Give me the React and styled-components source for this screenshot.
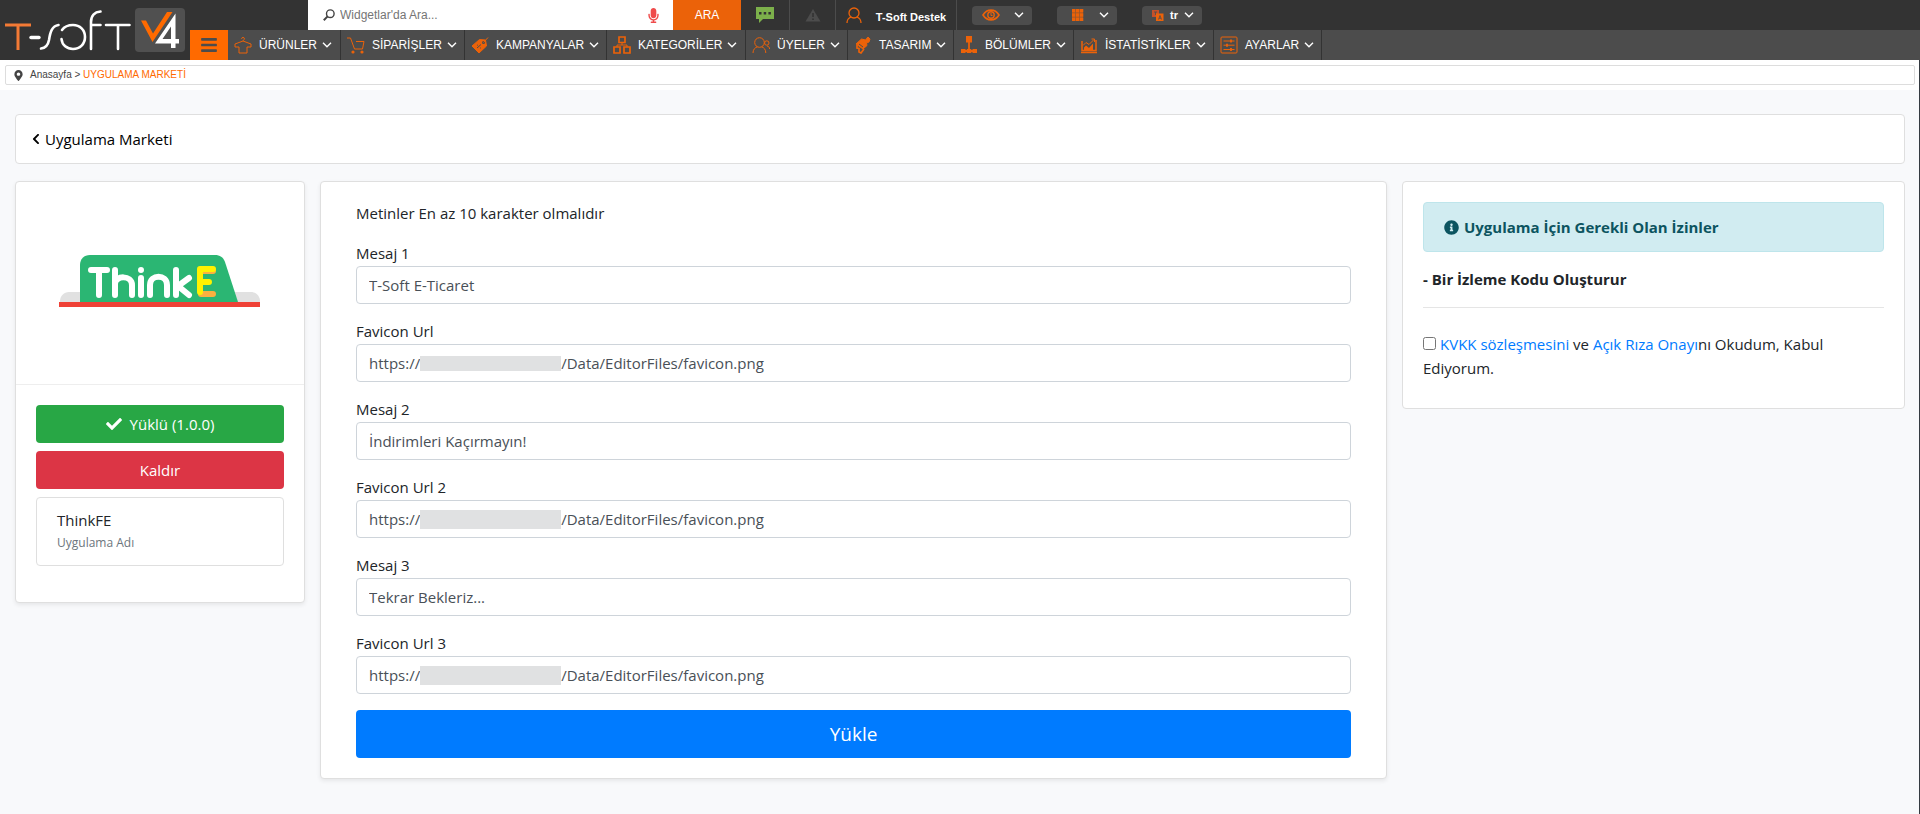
import { useState } from 'react';
import styled, { createGlobalStyle } from 'styled-components';
import {
    FaBars, FaCheck, FaChevronLeft, FaInfoCircle, FaMapMarkerAlt, FaMicrophone,
} from 'react-icons/fa';

const menuItems = [
    { label: 'ÜRÜNLER', icon: 'shirt', width: 113 },
    { label: 'SİPARİŞLER', icon: 'cart', width: 124 },
    { label: 'KAMPANYALAR', icon: 'tag', width: 142 },
    { label: 'KATEGORİLER', icon: 'boxes', width: 139 },
    { label: 'ÜYELER', icon: 'users', width: 102 },
    { label: 'TASARIM', icon: 'brush', width: 106 },
    { label: 'BÖLÜMLER', icon: 'tree', width: 120 },
    { label: 'İSTATİSTİKLER', icon: 'chart', width: 140 },
    { label: 'AYARLAR', icon: 'sliders', width: 108 },
];

const fields = [
    { id: 'mesaj1', label: 'Mesaj 1', value: 'T-Soft E-Ticaret' },
    { id: 'favicon1', label: 'Favicon Url', value: '/Data/EditorFiles/favicon.png', mask: 15 },
    { id: 'mesaj2', label: 'Mesaj 2', value: 'İndirimleri Kaçırmayın!' },
    { id: 'favicon2', label: 'Favicon Url 2', value: '/Data/EditorFiles/favicon.png', mask: 19 },
    { id: 'mesaj3', label: 'Mesaj 3', value: 'Tekrar Bekleriz...' },
    { id: 'favicon3', label: 'Favicon Url 3', value: '/Data/EditorFiles/favicon.png', mask: 19 },
];

const shapes = {
    shirt: (
        <path d="M7.5 2.8C7.5 1 10.5 1 10.5 2.8 10.5 4 9 3.8 9 5L1 8v3h4v6h8v-6h4V8L9 5" />
    ),
    cart: (
        <>
            <path d="M0 2h3.5l4 11h8L17 5.5H9" />
            <circle cx="6" cy="16" r="1.6" fill="currentColor" stroke="none" />
            <circle cx="15" cy="16" r="1.6" fill="currentColor" stroke="none" />
        </>
    ),
    tag: (
        <>
            <path d="M1 10 8.5 3.5l6 .5 1 6L8 17Z" fill="currentColor" />
            <circle cx="12.5" cy="6.5" r="1.5" fill="#4c4c4c" stroke="none" />
            <path d="m6 12 4-3.5M6 9.2h.8M9 12h.8" stroke="#4c4c4c" />
            <path d="M12.5 6.5 17 1.5" />
        </>
    ),
    boxes: (
        <>
            <path d="M6 1h6v5.5H6zM1 11h6v6H1zM11 11h6v6h-6z" strokeWidth="1.7" />
            <path d="M9 6.5V9M4 11V9h10v2" />
        </>
    ),
    users: (
        <>
            <circle cx="7.5" cy="6.5" r="4.8" />
            <path d="M1 17c0-3.5 2-5.5 4.5-6.2M9.5 10.8c2.5.7 4.3 2.7 4.3 6.2" />
            <circle cx="14.8" cy="7" r="2.2" />
            <path d="M15 10c1.7.3 2.5 1.3 2.6 3" />
        </>
    ),
    brush: (
        <>
            <path d="M2 8 7.5 3l4 1L14 1l2 2-1 3-2.5 1 .5 2.5L9 13Z" fill="currentColor" strokeWidth="1" />
            <path d="M3 9v3l2 .5V16l2 1 3-4" strokeWidth="1.7" />
            <path d="m5 8 4 3" stroke="#4c4c4c" />
        </>
    ),
    tree: (
        <>
            <path d="M6 0h6v6.5H6zM1 13h4.5v4H1zM6.8 13h4.5v4H6.8zM12.5 13H17v4h-4.5z" fill="currentColor" stroke="none" />
            <path d="M9 6v7M3 15h12" strokeWidth="1.8" />
        </>
    ),
    chart: (
        <>
            <path d="M2 5v9.5h14V4M1 16.5h16" strokeWidth="1.5" />
            <path d="M3 9.5 6 6.5l3 2 5-5M11.5 3H14.5V6" />
            <path d="M4 14v-2.5l2-2 3 2.5 4-4.5V14Z" fill="currentColor" stroke="none" />
        </>
    ),
    sliders: (
        <>
            <rect x="1" y="1" width="16" height="16" rx="1" />
            <path d="M3.5 5h11M3.5 9.2h11M3.5 13.5h11" />
            <path d="M11 3.5v3M7 7.7v3M11 12v3" strokeWidth="1.8" />
        </>
    ),
};

const Chevron = () => (
    <svg width="10" height="6" viewBox="0 0 10 6" fill="none" stroke="#fff" strokeWidth="1.4">
        <path d="m1 .8 4 4 4-4" />
    </svg>
);

const Logo = () => (
    <svg width="190" height="60" viewBox="0 0 190 60" fill="none" role="img" aria-label="T-Soft V4">
        <path d="M5 25h26M18 25v25" stroke="#f37a35" strokeWidth="3" />
        <g stroke="#fff" strokeWidth="2.6" strokeLinecap="round">
            <path d="M31 37.5h8" strokeWidth="3.4" />
            <path d="M41 48.5c5-.5 7-3 8-8.5 1.2-8 3-14 9.5-15" />
            <path d="M62 30c2.5-3.5 6-5 11-5 7 0 12 5 12 12s-5 12-12 12c-6 0-11-4-11.5-10" />
            <path d="M91 49V22c0-6 3.5-10 9.5-10.5M91 25h9.5M106 25h23.5M118 25v24" />
        </g>
        <rect x="135" y="8" width="50" height="44" rx="4" fill="#505050" />
        <path d="M141 20.5h5l7 13L167 12h5.5L152.5 42Z" fill="#ff6a00" />
        <path fillRule="evenodd" d="M175.5 13.5V39h3.5v4.5h-3.5V48H171v-4.5h-16ZM171 26.5 162.5 39h8.5Z" fill="#fff" />
    </svg>
);

// Roof sign of the application, drawn with thick round strokes
const AppLogo = () => (
    <svg width="202" height="54" viewBox="0 0 202 54" role="img" aria-label="ThinkE">
        <path d="M1 48v-1c0-5 4-9 9-9h182c5 0 9 4 9 9v1Z" fill="#e1e1e1" />
        <path d="M21 48V11C21 5 25 1 31 1h125c5 0 8 2 10 7l13 40Z" fill="#2bb673" />
        <path d="M0 48h201v5H0z" fill="#ef4136" />
        <g fill="none" stroke="#fff" strokeWidth="6" strokeLinecap="round" strokeLinejoin="round">
            <path d="M32 16h16M40 16v25" />
            <path d="M56 16v25M56 30c0-9 17-9 17 1v10" />
            <path d="M82 24v17M82 16v.1" />
            <path d="M91 41V31c0-11 17-11 17 0v10" />
            <path d="M117 16v25M130 24l-11 8 11 9" />
        </g>
        <g fill="none" strokeWidth="6" strokeLinecap="round" strokeLinejoin="round">
            <path d="M142 17h12M142 40h12" stroke="#fbb040" />
            <path d="M154 15h-13v23M141 28h9" stroke="#fff200" />
        </g>
    </svg>
);

const App = () => {
    const [values, setValues] = useState(fields.map((f) => f.value));
    const [accepted, setAccepted] = useState(false);

    const changeValue = (index, value) => {
        setValues(values.map((v, i) => (i === index ? value : v)));
    };

    return (
        <>
            <GlobalStyle />
            <Header>
                <Logo />
                <HeaderRows>
                    <TopRow>
                        <SearchBox>
                            <svg width="12" height="12" viewBox="0 0 12 12" fill="none" stroke="#444" strokeWidth="1.4">
                                <circle cx="7.3" cy="4.7" r="3.8" />
                                <path d="M4.6 7.4.8 11.2" strokeWidth="2" />
                            </svg>
                            <SearchInput type="text" aria-label="Ara" placeholder="Widgetlar'da Ara..." />
                            <FaMicrophone color="#ef4b4b" size={15} />
                        </SearchBox>
                        <SearchButton>ARA</SearchButton>
                        <TopButton $width={49} aria-label="Mesajlar">
                            <svg width="18" height="16" viewBox="0 0 18 16">
                                <path d="M0 0h18v12H7l-4 4v-4H0Z" fill="#7cb04b" />
                                <path d="M3 5h2.5v2.5H3zM7.7 5h2.5v2.5H7.7zM12.4 5h2.5v2.5h-2.5z" fill="#333" />
                            </svg>
                        </TopButton>
                        <TopButton $width={46} aria-label="Uyarılar">
                            <svg width="16" height="14" viewBox="0 0 16 14">
                                <path d="M8 1 15.5 13.5H.5Z" fill="#4c4c4c" />
                                <path d="M8 5v4M8 10.5V12" stroke="#333" strokeWidth="1.6" />
                            </svg>
                        </TopButton>
                        <TopButton $width={121}>
                            <svg width="16" height="16" viewBox="0 0 16 16" fill="none" stroke="#eb6209" strokeWidth="1.3">
                                <circle cx="8" cy="6" r="5" />
                                <path d="M1 16c0-3.5 1.5-5 4-6M11 10c2.5 1 4 2.5 4 6" />
                            </svg>
                            <SupportText>T-Soft Destek</SupportText>
                        </TopButton>
                        <Pills>
                            <Pill aria-label="Görünüm">
                                <svg width="18" height="12" viewBox="0 0 18 12" fill="none" stroke="#eb6209">
                                    <path d="M1 6c4-6.5 12-6.5 16 0-4 6.5-12 6.5-16 0Z" strokeWidth="1.6" />
                                    <circle cx="9" cy="6" r="3.2" strokeWidth="1.4" />
                                    <path d="M9 4v2.5h1.5" />
                                </svg>
                                <Chevron />
                            </Pill>
                            <Pill aria-label="Uygulamalar">
                                <svg width="20" height="12" viewBox="0 0 20 12" fill="#eb6209">
                                    <path d="M5 0h11v12H5z" fillOpacity=".45" />
                                    <path d="M5 0h3.3v3.5H5zM9 0h3.3v3.5H9zM13 0h3.3v3.5H13zM5 4.2h3.3v3.5H5zM9 4.2h3.3v3.5H9zM13 4.2h3.3v3.5H13zM5 8.5h3.3V12H5zM9 8.5h3.3V12H9zM13 8.5h3.3V12H13z" />
                                </svg>
                                <Chevron />
                            </Pill>
                            <Pill>
                                <svg width="12" height="11" viewBox="0 0 12 11">
                                    <path d="M0 0h7v7H0z" fill="#c4512a" />
                                    <path d="M4 3.5h7.5V11H4z" fill="#eb6209" />
                                    <path d="M2 2h3M3.5 2v3M6.5 9.5l1.5-4 1.5 4M7 8.2h2" stroke="#4c4c4c" strokeWidth=".8" fill="none" />
                                </svg>
                                tr
                                <Chevron />
                            </Pill>
                        </Pills>
                    </TopRow>
                    <Menu>
                        <MenuToggle aria-label="Menü"><FaBars size={18} /></MenuToggle>
                        {menuItems.map((item) => (
                            <MenuItem key={item.label} href="#" $width={item.width}>
                                <MenuIcon viewBox="0 0 18 18">{shapes[item.icon]}</MenuIcon>
                                {item.label}
                                <Chevron />
                            </MenuItem>
                        ))}
                    </Menu>
                </HeaderRows>
            </Header>

            <Page>
                <BreadcrumbBar>
                    <Breadcrumb>
                        <FaMapMarkerAlt size={11} />
                        <span><a href="#">Anasayfa</a> &gt; <Current>UYGULAMA MARKETİ</Current></span>
                    </Breadcrumb>
                </BreadcrumbBar>

                <Content>
                    <TitleCard>
                        <BackLink href="#"><FaChevronLeft size={12} />Uygulama Marketi</BackLink>
                    </TitleCard>
                    <Columns>
                        <Card>
                            <AppImage><AppLogo /></AppImage>
                            <AppBody>
                                <Button $color="#28a745"><FaCheck size={16} />Yüklü (1.0.0)</Button>
                                <Button $color="#dc3545">Kaldır</Button>
                                <AppInfo>
                                    <AppName>ThinkFE</AppName>
                                    <AppCaption>Uygulama Adı</AppCaption>
                                </AppInfo>
                            </AppBody>
                        </Card>

                        <FormCard as="form" onSubmit={(e) => e.preventDefault()}>
                            <Hint>Metinler En az 10 karakter olmalıdır</Hint>
                            {fields.map((field, i) => (
                                <Field key={field.id}>
                                    <label htmlFor={field.id}>{field.label}</label>
                                    <InputBox>
                                        {field.mask && <>https://<Mask $height={field.mask} /></>}
                                        <TextInput
                                            id={field.id}
                                            type="text"
                                            value={values[i]}
                                            onChange={(e) => changeValue(i, e.target.value)}
                                        />
                                    </InputBox>
                                </Field>
                            ))}
                            <SubmitButton type="submit" $color="#007bff">Yükle</SubmitButton>
                        </FormCard>

                        <PermissionCard>
                            <Alert><FaInfoCircle />Uygulama İçin Gerekli Olan İzinler</Alert>
                            <Permission>- Bir İzleme Kodu Oluşturur</Permission>
                            <Agreement>
                                <input
                                    id="kvkk"
                                    type="checkbox"
                                    checked={accepted}
                                    onChange={(e) => setAccepted(e.target.checked)}
                                />
                                <label htmlFor="kvkk">
                                    <a href="#">KVKK sözleşmesini</a> ve <a href="#">Açık Rıza Onayı</a>nı Okudum, Kabul Ediyorum.
                                </label>
                            </Agreement>
                        </PermissionCard>
                    </Columns>
                </Content>
            </Page>
        </>
    );
};
export default App;

const GlobalStyle = createGlobalStyle`
*{
    box-sizing:border-box;
}
body{
    margin:0;
    background:#f8f9fb;
    color:#212529;
    font-family:"Open Sans", "Noto Sans", sans-serif;
    font-size:15px;
    line-height:24px;
}
#root{
    display:flex;
    flex-direction:column;
    min-height:100vh;
}
button, input{
    font:inherit;
}
button{
    border:0;
    cursor:pointer;
}
a{
    color:inherit;
    text-decoration:none;
}
`;

const Page = styled.div`
flex:1;
border-right:1px solid #343a40;
`;

const Header = styled.header`
display:flex;
background:#333;
color:#fff;
font-family:"Liberation Sans", Arial, sans-serif;
`;

const HeaderRows = styled.div`
flex:1;
`;

const TopRow = styled.div`
display:flex;
height:30px;
padding-left:118px;
`;

const SearchBox = styled.div`
display:flex;
align-items:center;
gap:5px;
width:365px;
padding:0 12px 0 15px;
background:#fff;
`;

const SearchInput = styled.input`
flex:1;
min-width:0;
padding:0;
border:0;
outline:0;
font-size:12px;
&::placeholder{
    color:#757575;
}
`;

const SearchButton = styled.button`
width:68px;
background:#eb6209;
color:#fff;
font-size:12px;
`;

const TopButton = styled.button`
display:flex;
align-items:center;
justify-content:center;
gap:12px;
width:${(props) => props.$width}px;
padding:0;
border-right:1px solid #4c4c4c;
background:transparent;
color:#fff;
`;

const SupportText = styled.span`
padding:4px 0 0 2px;
font-size:11px;
font-weight:bold;
`;

const Pills = styled.div`
display:flex;
align-items:center;
gap:25px;
padding-left:15px;
`;

const Pill = styled.button`
display:flex;
align-items:center;
justify-content:space-between;
width:60px;
height:19px;
padding:0 8px 0 10px;
border-radius:4px;
background:#4c4c4c;
color:#fff;
font-size:11px;
font-weight:bold;
`;

const Menu = styled.nav`
display:flex;
height:30px;
background:#4c4c4c;
`;

const MenuToggle = styled.button`
display:flex;
align-items:center;
justify-content:center;
width:38px;
padding:0;
background:#ff6a00;
color:#4c4c4c;
`;

const MenuItem = styled.a`
display:flex;
align-items:center;
gap:5px;
width:${(props) => props.$width}px;
padding-left:6px;
border-right:1px solid #333;
font-size:12px;
white-space:nowrap;
`;

const MenuIcon = styled.svg`
width:18px;
height:18px;
margin-right:2px;
fill:none;
stroke:currentColor;
color:#eb6209;
`;

const BreadcrumbBar = styled.div`
padding:5px 4px 5px 5px;
background:#fff;
`;

const Breadcrumb = styled.div`
display:flex;
align-items:center;
gap:6px;
height:20px;
padding:0 7px;
border:1px solid #ddd;
border-radius:2px;
color:#444;
font-family:"Liberation Sans", Arial, sans-serif;
font-size:10px;
`;

const Current = styled.span`
color:#ff6a00;
`;

const Content = styled.main`
padding:24px 14px 36px 15px;
`;

const Card = styled.section`
border:1px solid #dfdfdf;
border-radius:4px;
background:#fff;
box-shadow:0 2px 4px rgba(0,0,0,.075);
`;

const TitleCard = styled.div`
margin-bottom:17px;
padding:12px 14px;
border:1px solid #dfdfdf;
border-radius:4px;
background:#fff;
`;

const BackLink = styled.a`
display:flex;
align-items:center;
gap:3px;
color:#000;
`;

const Columns = styled.div`
display:grid;
grid-template-columns:290fr 1067fr 503fr;
gap:15px;
align-items:start;
`;

const AppImage = styled.div`
display:flex;
align-items:center;
justify-content:center;
height:203px;
padding-bottom:4px;
border-bottom:1px solid #eee;
`;

const AppBody = styled.div`
display:flex;
flex-direction:column;
gap:8px;
padding:20px 20px 36px;
`;

const Button = styled.button`
display:flex;
align-items:center;
justify-content:center;
gap:8px;
width:100%;
height:38px;
border-radius:4px;
background:${(props) => props.$color};
color:#fff;
`;

const AppInfo = styled.div`
padding:10px 20px 12px;
border:1px solid #dfdfdf;
border-radius:4px;
`;

const AppName = styled.div`
margin-bottom:1px;
font-weight:500;
`;

const AppCaption = styled.div`
color:#6c757d;
font-size:12px;
line-height:20px;
`;

const FormCard = styled(Card)`
padding:19px 35px 20px;
`;

const Hint = styled.div`
margin-bottom:16px;
`;

const Field = styled.div`
margin-bottom:16px;
label{
    display:block;
    margin-bottom:1px;
}
& + &{
    margin-top:-1px;
}
`;

const InputBox = styled.div`
display:flex;
align-items:center;
height:38px;
padding:0 12px;
border:1px solid #ced4da;
border-radius:4px;
color:#495057;
`;

const TextInput = styled.input`
flex:1;
min-width:0;
padding:0;
border:0;
outline:0;
background:transparent;
color:inherit;
`;

const Mask = styled.span`
width:141px;
height:${(props) => props.$height}px;
background:#e0e1e2;
`;

const SubmitButton = styled(Button)`
height:48px;
font-size:19px;
`;

const PermissionCard = styled(Card)`
padding:20px 20px 28px;
box-shadow:none;
`;

const Alert = styled.div`
display:flex;
align-items:center;
gap:5px;
padding:12px 20px;
border:1px solid #bee5eb;
border-radius:4px;
background:#d1ecf1;
color:#0c5460;
font-weight:bold;
`;

const Permission = styled.div`
padding:15px 0 16px;
border-bottom:1px solid #e5e5e5;
font-weight:bold;
`;

const Agreement = styled.div`
padding-top:24px;
input{
    margin:0 4px 0 0;
}
a{
    color:#007bff;
}
`;
